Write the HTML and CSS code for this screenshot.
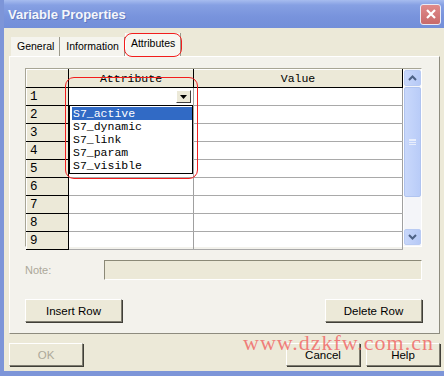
FILE: index.html
```html
<!DOCTYPE html>
<html lang="en">
<head>
    <meta charset="UTF-8">
    <title>Variable Properties</title>
    <link rel="stylesheet" href="styles.css">
</head>
<body>
    <div class="window">
        <div class="titlebar">
            <span class="title">Variable Properties</span>
            <span class="close-btn">
                <svg width="12" height="12" viewBox="0 0 12 12"><path d="M2 2 L10 10 M10 2 L2 10" stroke="#fff" stroke-width="2.2"/></svg>
            </span>
        </div>

        <div class="client">
            <div class="tabs">
                <div class="tab">General</div>
                <div class="tab">Information</div>
                <div class="tab active">Attributes</div>
            </div>

            <div class="panel">
                <div class="grid">
                    <table class="sheet">
                        <tr class="head">
                            <th class="corner"></th>
                            <th class="col-attr">Attribute</th>
                            <th class="col-val">Value</th>
                        </tr>
                        <tr><td class="num">1</td><td class="combo-cell"><span class="drop-btn"><svg width="7" height="4" viewBox="0 0 7 4"><path d="M0 0 H7 L3.5 4 Z" fill="#000"/></svg></span></td><td></td></tr>
                        <tr><td class="num">2</td><td></td><td></td></tr>
                        <tr><td class="num">3</td><td></td><td></td></tr>
                        <tr><td class="num">4</td><td></td><td></td></tr>
                        <tr><td class="num">5</td><td></td><td></td></tr>
                        <tr><td class="num">6</td><td></td><td></td></tr>
                        <tr><td class="num">7</td><td></td><td></td></tr>
                        <tr><td class="num">8</td><td></td><td></td></tr>
                        <tr><td class="num">9</td><td></td><td></td></tr>
                    </table>
                    <div class="scrollbar">
                        <div class="sb-btn"><svg width="9" height="6" viewBox="0 0 9 6"><path d="M1 5 L4.5 1.5 L8 5" stroke="#4d6185" stroke-width="2" fill="none"/></svg></div>
                        <div class="sb-thumb"><span class="grip"></span></div>
                        <div class="sb-track"></div>
                        <div class="sb-btn"><svg width="9" height="6" viewBox="0 0 9 6"><path d="M1 1 L4.5 4.5 L8 1" stroke="#4d6185" stroke-width="2" fill="none"/></svg></div>
                    </div>
                    <ul class="droplist">
                        <li class="sel">S7_active</li>
                        <li>S7_dynamic</li>
                        <li>S7_link</li>
                        <li>S7_param</li>
                        <li>S7_visible</li>
                    </ul>
                    <div class="mark mark-col"></div>
                </div>

                <div class="note-row">
                    <span class="note-label">Note:</span>
                    <div class="note-box"></div>
                </div>

                <div class="row-buttons">
                    <button class="btn">Insert Row</button>
                    <button class="btn">Delete Row</button>
                </div>
            </div>

            <div class="footer">
                <button class="btn btn-ok" disabled>OK</button>
                <div class="footer-right">
                    <button class="btn">Cancel</button>
                    <button class="btn">Help</button>
                </div>
            </div>
        </div>

        <div class="mark mark-tab"></div>
        <div class="watermark">www.dzkfw.com.cn</div>
    </div>
</body>
</html>
```

FILE: styles.css
```css
* { box-sizing: border-box; }
body { margin: 0; background: #ece9d8; font-family: "Liberation Sans", Arial, sans-serif; font-size: 11px; }

.window { position: relative; width: 444px; height: 376px; background: #ece9d8; border-left: 4px solid #7d95d8; border-bottom: 5px solid #7d95d8; overflow: hidden; }

.titlebar { height: 28px; margin-left: -4px; display: flex; align-items: center; justify-content: space-between; padding: 0 3px 0 8px;
    background: linear-gradient(#a7bcef 0%, #86a0e3 18%, #7893dc 60%, #738fd9 100%); }
.title { color: #f4f6fb; font-weight: bold; font-size: 13px; text-shadow: 1px 1px 0 #5f79c0; }
.close-btn { width: 21px; height: 21px; border: 1px solid #e8eaf4; border-radius: 3px; background: linear-gradient(#e08a8a, #c86a6a); display: flex; align-items: center; justify-content: center; }

.client { padding: 5px 4px 0 5px; }

.tabs { display: flex; align-items: flex-end; height: 23px; padding-left: 2px; font-size: 10.5px; }
.tab { height: 19px; padding: 3px 5px 0 6px; border-right: 1px solid #9c9a8c; background: #f5f4ee; }
.tab.active { height: 23px; padding: 4px 5px 0 5px; background: #f7f6f1; border-left: 1px solid #fff; }

.panel { height: 278px; border: 1px solid #fff; border-right-color: #8d8b7e; border-bottom-color: #8d8b7e; background: #f3f2ec; padding: 11px 13px 0 15px; }

.grid { position: relative; display: flex; width: 397px; height: 179px; border: 1px solid #a8a696; border-right-color: #fff; border-bottom-color: #fff; background: #fff; }
.sheet { border-collapse: collapse; font-family: "Liberation Mono", "Courier New", monospace; font-size: 11.5px; table-layout: fixed; width: 377px; }
.sheet tr { height: 18px; }
.sheet td { border-bottom: 1px solid #a9a9a9; border-right: 1px solid #a0a0a0; padding: 0; }
.head th { height: 18px; background: #ece9d8; font-weight: normal; border-right: 1px solid #000; border-bottom: 1px solid #000; border-top: 1px solid #fff; padding: 0; }
.corner { width: 42px; }
.col-attr { width: 125px; }
.sheet td.num { background: #ece9d8; border-right: 1px solid #000; border-bottom: 1px solid #000; padding-left: 3px; font-size: 12.5px; border-left: 1px solid #fff; }
.combo-cell { position: relative; }
.drop-btn { position: absolute; right: 2px; top: 2px; width: 15px; height: 13px; background: #ece9d8; border: 1px solid; border-color: #fff #404040 #404040 #fff; display: flex; align-items: center; justify-content: center; }

.scrollbar { width: 17px; margin-left: 1px; display: flex; flex-direction: column; background: #f4f5f9; }
.sb-btn { height: 16px; margin: 1px 0; border: 1px solid #b9cbf3; border-radius: 2px; background: linear-gradient(90deg, #c8d7fa, #b6c9f6); display: flex; align-items: center; justify-content: center; }
.sb-thumb { height: 110px; border: 1px solid #b0c4f0; border-radius: 2px; background: linear-gradient(90deg, #c9d8fb, #b9ccf8); display: flex; align-items: center; justify-content: center; }
.grip { width: 7px; height: 6px; border-top: 1px solid #e8eefc; border-bottom: 1px solid #e8eefc; background: linear-gradient(#e8eefc 0 1px, transparent 1px 2px, #e8eefc 2px 3px, transparent 3px); }
.sb-track { flex: 1; }

.droplist { position: absolute; left: 43px; top: 36px; width: 124px; margin: 0; padding: 1px 0 1px 2px; list-style: none; background: #fff; border: 1px solid #000; font-family: "Liberation Mono", "Courier New", monospace; font-size: 11.5px; }
.droplist li { height: 13px; line-height: 13px; padding-left: 1px; }
.droplist li.sel { background: #316ac5; color: #fff; }

.mark { position: absolute; border: 1px solid #f21d1d; border-radius: 9px; }
.mark-col { left: 39px; top: 8px; width: 133px; height: 102px; }
.mark-tab { left: 120px; top: 33px; width: 58px; height: 24px; border-radius: 8px; }

.note-row { display: flex; align-items: center; margin-top: 12px; height: 21px; }
.note-label { width: 79px; color: #aca899; }
.note-box { width: 318px; height: 20px; border: 1px solid #8b8977; border-right-color: #fff; border-bottom-color: #fff; background: #ece9d8; }

.row-buttons { display: flex; justify-content: space-between; margin-top: 19px; width: 397px; }
.btn { font-family: "Liberation Sans", Arial, sans-serif; font-size: 11.5px; width: 97px; height: 23px; background: #ece9d8; color: #000; border: 1px solid; border-color: #fff #7e7c70 #7e7c70 #fff; box-shadow: 1px 1px 0 #403f38; padding: 0; }

.footer { display: flex; justify-content: space-between; margin-top: 9px; }
.footer .btn { width: 74px; }
.btn-ok { color: #aca899; }
.footer-right { display: flex; gap: 6px; }

.watermark { position: absolute; left: 239px; top: 332px; font-family: "Liberation Serif", "Times New Roman", serif; font-size: 22px; line-height: 1; letter-spacing: 1px; color: rgba(240, 90, 90, 0.75); }
```
